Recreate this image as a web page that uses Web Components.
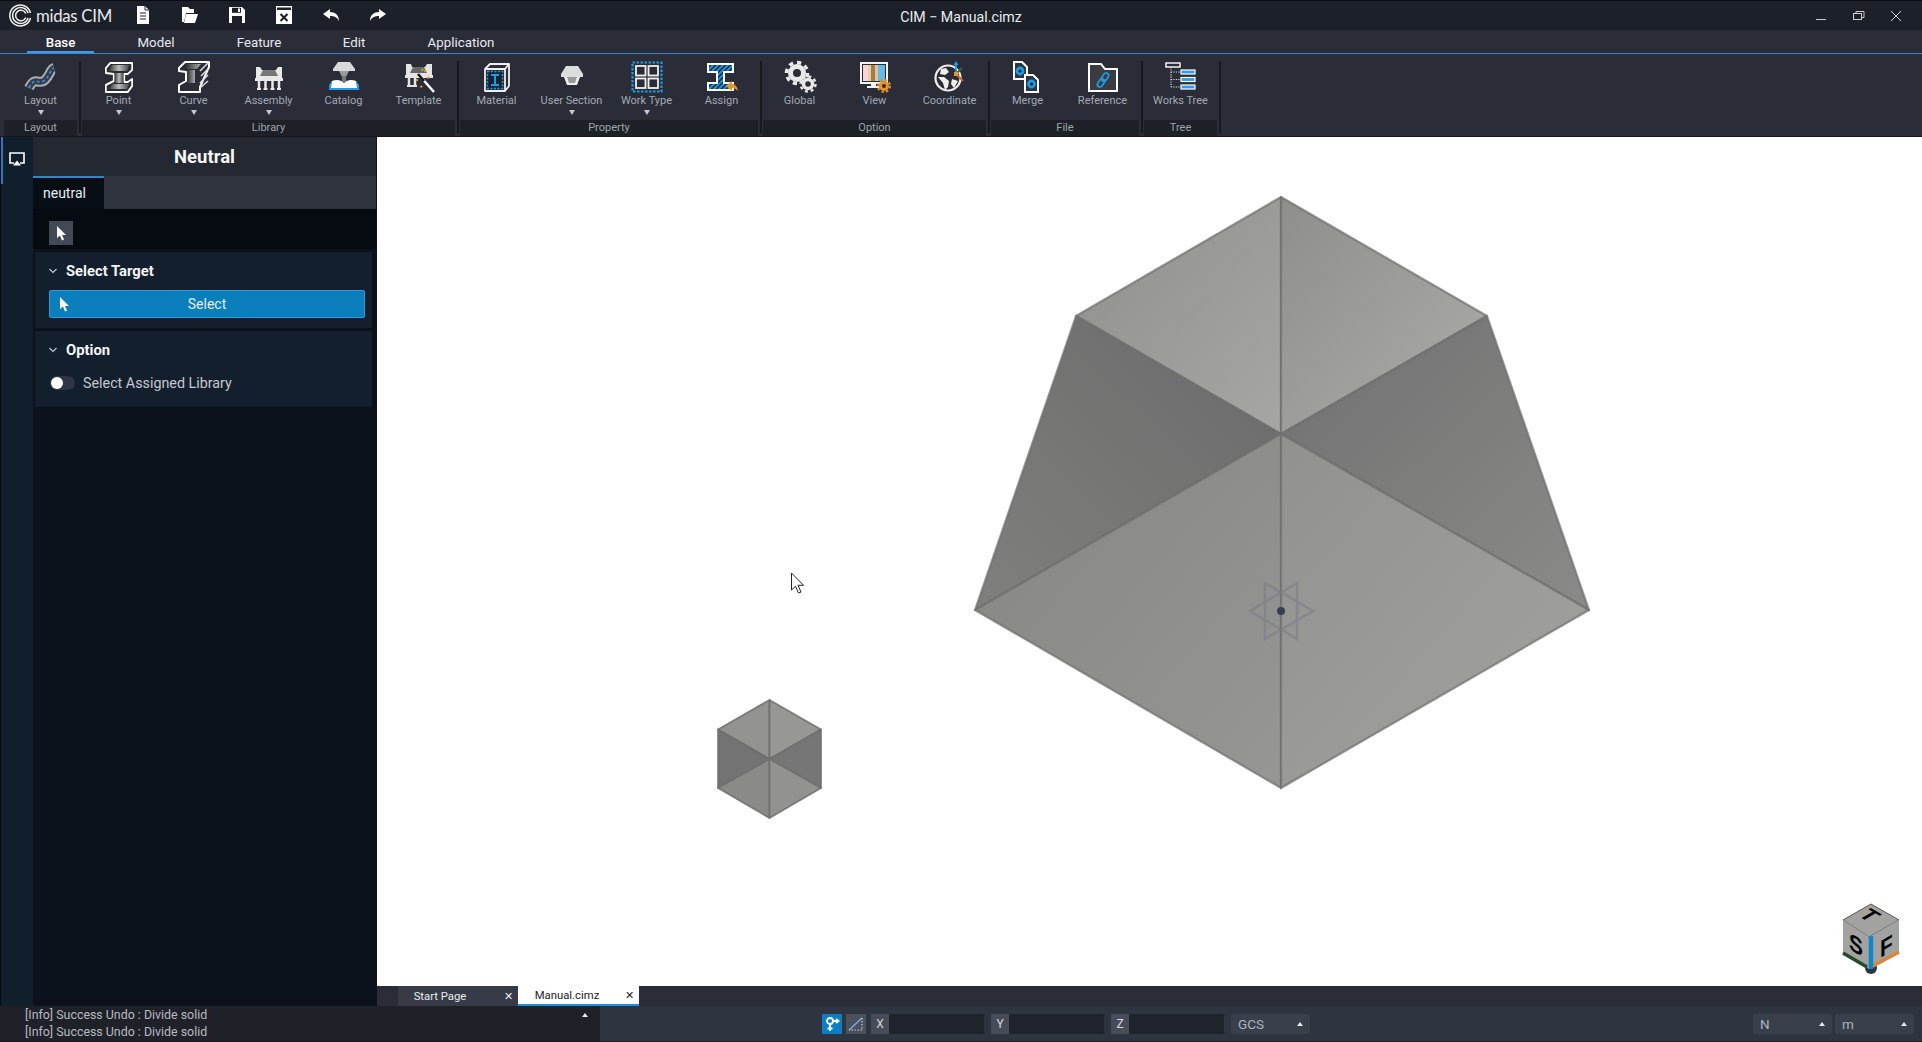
<!DOCTYPE html>
<html>
<head>
<meta charset="utf-8">
<title>CIM - Manual.cimz</title>
<style>
  html, body { margin: 0; height: 100%; overflow: hidden; background: #1c2028; font-family: Roboto, "Liberation Sans", sans-serif; }
</style>
</head>
<body>
<cim-app></cim-app>
<script>
// ---- icon set (all drawn, 32x32 box unless noted) ----
const ICONS = {
  layout: `<path d="M4 27C10 14 14 25 20 19S25 8 29 7" fill="none" stroke="#a9acb1" stroke-width="10"/><path d="M4 27C10 14 14 25 20 19S25 8 29 7" fill="none" stroke="#363b47" stroke-width="6"/><path d="M4 27C10 14 14 25 20 19S25 8 29 7" fill="none" stroke="#2c8fdc" stroke-width="1.800" stroke-dasharray="3 2.500"/>`,
  point: `<defs><linearGradient id="w"><stop offset="0" stop-color="#333"/><stop offset=".5" stop-color="#bbb"/><stop offset="1" stop-color="#444"/></linearGradient></defs>
    <g transform="translate(2 0) scale(.875 1)">
    <path d="M6 2H31V9L26 13H22V21H26L31 18V25L26 31H1V24L10 20V13L1 12V7Z" fill="#2a2d38" stroke="#fff" stroke-width="2" stroke-linejoin="round"/>
    <path d="M4 10L8 4H28L25 10Z" fill="url(#w)"/><rect x="11" y="12" width="10" height="10" fill="url(#w)"/><path d="M4 28L9 23H28L25 28Z" fill="url(#w)"/></g>`,
  curve: `<defs><linearGradient id="w"><stop offset="0" stop-color="#2d2d2d"/><stop offset="1" stop-color="#aaa"/></linearGradient></defs>
    <path d="M1 7L7 1H31V6L22 26V31H1V24L8 20V11L1 10Z" fill="#2a2d38" stroke="#fff" stroke-width="2" stroke-linejoin="round"/>
    <path d="M9 3H23L19 8H7Z" fill="url(#w)"/><rect x="9" y="9" width="8" height="13" fill="url(#w)"/><path d="M22 10L30 2M23 15L30 8M22 22L30 14M22 27L30 20" stroke="#ddd" stroke-width="1.500"/>`,
  assembly: `<path d="M3 6H7L9 9H23L25 6H29V17H3Z" fill="#e8e8e8"/><path d="M7 15L10 9H22L25 15Z" fill="#777"/><path d="M2 17H30V20H2Z" fill="#e8e8e8"/><path d="M6 20V28M12.500 20V28M19.500 20V28M26 20V28" stroke="#e8e8e8" stroke-width="2.500"/><path d="M4 28H8M10.500 28H14.500M17.500 28H21.500M24 28H28" stroke="#e8e8e8" stroke-width="2"/>`,
  catalog: `<path d="M10 1H22L27 8V10H5V8Z" fill="#d9d9d9"/><path d="M11 10H21L18 16H14Z" fill="#9a9a9a"/><rect x="14" y="15" width="4" height="6" fill="#777"/><path d="M4 20C9 18 13 19 16 22C19 19 23 18 28 20L30 27H2Z" fill="#fff"/><path d="M1 24L4 20L3 27H16H29L28 20L31 24V29H1Z" fill="#2a97e8"/>`,
  template: `<path d="M3 3H8L9 6H22L24 3H29V14H3Z" fill="#e4e4e4"/><path d="M7 12L10 6H21L24 12Z" fill="#666"/><path d="M2 14H30V17H2Z" fill="#e4e4e4"/><path d="M6 17V25M12 17V25" stroke="#e4e4e4" stroke-width="2.500"/><path d="M4 25H14" stroke="#e4e4e4" stroke-width="2"/><path d="M16 14L31 31" stroke="#fff" stroke-width="2.500"/><path d="M15 13L21 20" stroke="#111" stroke-width="2.500"/><path d="M22 9L23 12M13 19L16 19M24 17L27 16M19 25L17 27M19 8L20 10" stroke="#e9992b" stroke-width="2" stroke-dasharray="2 1"/>`,
  material: `<path d="M4 8L9 3H28V25L24 30H4Z" fill="#2d2d33" stroke="#eee" stroke-width="1.800" stroke-linejoin="round"/><path d="M4 8H24V30M24 8L28 3" fill="none" stroke="#eee" stroke-width="1.800"/><rect x="6.500" y="10.500" width="15" height="17" fill="#16232f" stroke="#1d9be5" stroke-width="1.500" stroke-dasharray="2 1.500"/><path d="M10 14H18M10 24H18M14 14V24" stroke="#1d9be5" stroke-width="2"/>`,
  usersection: `<path d="M10 5H22L27 13V16H5V13Z" fill="#dcdcdc"/><path d="M8 16H24L21 24H11Z" fill="#eee"/><path d="M11 16H21L19 22H13Z" fill="#999"/>`,
  worktype: `<rect x="1.500" y="1.500" width="29" height="29" fill="none" stroke="#1d9be5" stroke-width="2.200" stroke-dasharray="2.500 1.500"/><g fill="none" stroke="#f0f0f0" stroke-width="1.800"><rect x="5" y="5" width="9.500" height="9.500"/><rect x="17.500" y="5" width="9.500" height="9.500"/><rect x="5" y="17.500" width="9.500" height="9.500"/><rect x="17.500" y="17.500" width="9.500" height="9.500"/></g>`,
  assign: `<defs><pattern id="h" width="3.500" height="3.500" patternUnits="userSpaceOnUse" patternTransform="rotate(45)"><rect width="3.500" height="3.500" fill="#15324a"/><rect width="1.800" height="3.500" fill="#1d9be5"/></pattern></defs>
    <path d="M2 3H27V11H18V22H27V29H2V22H11V11H2Z" fill="url(#h)" stroke="#fff" stroke-width="2"/><path d="M20 25L26 20V23C29 23 31 25 32 30C30 28 28 27 26 27V30Z" fill="#e5962b"/>`,
  global: `<circle cx="13" cy="12" r="6.500" fill="none" stroke="#e8e8e8" stroke-width="5"/><circle cx="13" cy="12" r="10.500" fill="none" stroke="#e8e8e8" stroke-width="3.500" stroke-dasharray="4.200 4"/><circle cx="24" cy="23" r="4.500" fill="#2a2d38" stroke="#e8e8e8" stroke-width="3.500"/><circle cx="24" cy="23" r="7.500" fill="none" stroke="#e8e8e8" stroke-width="2.500" stroke-dasharray="3 2.900"/>`,
  view: `<rect x="2" y="2" width="26" height="20" fill="#2a2d38" stroke="#f3f3f3" stroke-width="2"/><rect x="4" y="4" width="5" height="16" fill="#f7d4d7"/><rect x="9" y="4" width="3" height="16" fill="#e8cfa0"/><rect x="12" y="4" width="4" height="16" fill="#a57c4c"/><rect x="16" y="4" width="3" height="16" fill="#d9c69a"/><rect x="19" y="4" width="7" height="16" fill="#6ab8e6"/><path d="M12 22H17V25H21V27H8V25H12Z" fill="#f3f3f3"/><circle cx="25" cy="25" r="3.500" fill="#2a2d38" stroke="#e5922a" stroke-width="3"/><circle cx="25" cy="25" r="6" fill="none" stroke="#e5922a" stroke-width="2" stroke-dasharray="2.500 2.200"/>`,
  coordinate: `<circle cx="14" cy="17" r="12.500" fill="none" stroke="#eee" stroke-width="2.200"/><path d="M7 8L12 7L15 11L11 14L6 13ZM4 16L10 16L15 20L14 26L11 29L9 22ZM18 18L24 20L20 27L17 23Z" fill="#eee"/><path d="M22 13V2" stroke="#1d9be5" stroke-width="1.800"/><path d="M22 0L24.500 4H19.500Z" fill="#1d9be5"/><path d="M22 13L28 7" stroke="#2c6b30" stroke-width="1.800"/><path d="M22 13L29 20" stroke="#d8622a" stroke-width="1.800"/><rect x="20" y="11" width="4" height="4" fill="#e5962b"/>`,
  merge: `<path d="M2 1H10L15 6V18H2Z" fill="#2d3540" stroke="#fff" stroke-width="2"/><circle cx="8" cy="10" r="3" fill="#123" stroke="#1d9be5" stroke-width="2.800"/><path d="M13 14H21L26 19V31H13Z" fill="#2d3540" stroke="#fff" stroke-width="2"/><circle cx="19.500" cy="23" r="3" fill="#123" stroke="#1d9be5" stroke-width="2.800"/>`,
  reference: `<path d="M2 3H14L18 8H30V30H2Z" fill="#3b3c42" stroke="#fff" stroke-width="2"/><g transform="rotate(-55 16 19)" fill="none" stroke="#1d9be5" stroke-width="1.700"><rect x="8" y="16.500" width="9" height="5" rx="2.500"/><rect x="15" y="16.500" width="9" height="5" rx="2.500"/></g>`,
  workstree: `<rect x="1" y="2" width="14" height="4" fill="#2a2d38" stroke="#fff" stroke-width="1.400"/><path d="M6 6V26M6 11H15M6 18.500H15M6 26H15" fill="none" stroke="#ddd" stroke-width="1.200" stroke-dasharray="1.200 1.200"/><g fill="#2b9ce6" stroke="#fff" stroke-width="1.200"><rect x="16" y="9" width="14" height="4"/><rect x="16" y="16.500" width="14" height="4"/><rect x="16" y="24" width="14" height="4"/></g>`,
  // titlebar, 18x18
  doc: `<path d="M3 0H11L15 4V18H3Z" fill="#fff"/><path d="M6 7H12M6 10H12M6 13H12" stroke="#1c2028" stroke-width="1.200"/><path d="M11 0V4H15" fill="none" stroke="#1c2028" stroke-width="1"/>`,
  open: `<path d="M1 1H7L9 3H13V7H5L3 16H1Z" fill="#fff"/><path d="M5 8H17L14 17H3Z" fill="#fff"/>`,
  save: `<path d="M1 1H14L17 4V17H1Z" fill="#fff"/><rect x="4" y="1.800" width="9" height="5" fill="#1c2028"/><rect x="10" y="2.500" width="2" height="3.500" fill="#fff"/><rect x="4" y="10" width="10" height="7" fill="#1c2028"/>`,
  closefile: `<rect x="1" y="0" width="16" height="18" fill="#fff"/><rect x="2" y="1.500" width="14" height="2.500" fill="#1c2028"/><path d="M5.500 8L12.500 15M12.500 8L5.500 15" stroke="#1c2028" stroke-width="2"/>`,
  undo: `<path d="M8 3L1 8L8 13V10C12 10 15 11 17 15C17 9 13 6 8 6Z" fill="#fff"/>`,
  redo: `<path d="M10 3L17 8L10 13V10C6 10 3 11 1 15C1 9 5 6 10 6Z" fill="#fff"/>`
};

class CimIcon extends HTMLElement {
  connectedCallback() {
    const size = this.getAttribute('size') || 32;
    const box = this.getAttribute('box') || 32;
    this.attachShadow({ mode: 'open' }).innerHTML = `
      <style>:host { display: block; width: ${size}px; height: ${size}px; } svg { display: block; overflow: visible; }</style>
      <svg width="${size}" height="${size}" viewBox="0 0 ${box} ${box}">${ICONS[this.getAttribute('name')] || ''}</svg>`;
  }
}
customElements.define('cim-icon', CimIcon);

class CimTitlebar extends HTMLElement {
  connectedCallback() {
    const tools = ['doc', 'open', 'save', 'closefile', 'undo', 'redo'];
    this.attachShadow({ mode: 'open' }).innerHTML = `
      <style>
        :host { display: flex; align-items: center; height: 30px; background: #1c2028; border-top: 1px solid #0a0c10; box-sizing: border-box; position: relative; color: #fff; }
        .logo { display: flex; align-items: center; margin-left: 9px; width: 125px; gap: 4px; }
        .name { font: 400 16.800px Lato, Roboto, sans-serif; color: #e6e8ea; letter-spacing: -.3px; }
        .tools { display: flex; gap: 29px; margin-top: -2px; }
        .title { position: absolute; left: 0; right: 0; top: 8px; text-align: center; font-size: 14.200px; color: #e9ebee; }
        .win { margin-left: auto; display: flex; gap: 21px; padding-right: 18px; }
      </style>
      <div class="logo">
        <svg width="23" height="23" viewBox="0 0 23 23" fill="none" stroke="#f0f0f0" stroke-width="1.500">
          <path d="M21.500 9A10.500 10.500 0 1 0 21.500 14"/><path d="M19.200 9A8 8 0 1 0 19.200 14"/><path d="M16.800 9.500A5.300 5.300 0 1 0 16.800 13.500"/>
        </svg>
        <span class="name">midas CIM</span>
      </div>
      <div class="tools">${tools.map(t => `<cim-icon name="${t}" size="18" box="18"></cim-icon>`).join('')}</div>
      <div class="title">CIM − Manual.cimz</div>
      <div class="win">
        <svg width="16" height="16" viewBox="0 0 16 16" fill="none" stroke="#c9ccd0" stroke-width="1"><path d="M2 11.500H12"/></svg>
        <svg width="16" height="16" viewBox="0 0 16 16" fill="none" stroke="#c9ccd0" stroke-width="1"><rect x="2.500" y="5.500" width="8" height="6"/><path d="M5 5V3.500H13V9.500H11"/></svg>
        <svg width="16" height="16" viewBox="0 0 16 16" fill="none" stroke="#c9ccd0" stroke-width="1"><path d="M3 3L13 13M13 3L3 13"/></svg>
      </div>`;
  }
}
customElements.define('cim-titlebar', CimTitlebar);

class CimRibbonTabs extends HTMLElement {
  connectedCallback() {
    const tabs = [['Model', 124], ['Feature', 82], ['Edit', 108], ['Application', 106]];
    this.attachShadow({ mode: 'open' }).innerHTML = `
      <style>
        :host { display: flex; height: 24px; box-sizing: border-box; background: #2a2d38; border-bottom: 1px solid #3d86d4; padding-left: 27px; font-size: 13.300px; color: #e8eaee; }
        .tab { height: 23px; line-height: 25px; text-align: center; }
        .on { width: 67px; box-shadow: inset 0 -2px 0 #3d9be8; color: #fff; font-weight: 500; }
      </style>
      <div class="tab on">Base</div>
      ${tabs.map(([t, w]) => `<div class="tab" style="width:${w}px">${t}</div>`).join('')}`;
  }
}
customElements.define('cim-ribbon-tabs', CimRibbonTabs);

class CimRibbonButton extends HTMLElement {
  connectedCallback() {
    const drop = this.hasAttribute('drop');
    this.attachShadow({ mode: 'open' }).innerHTML = `
      <style>
        :host { display: flex; flex-direction: column; align-items: center; width: 75px; height: 66px; padding-top: 7px; box-sizing: border-box; }
        .label { font-size: 11px; line-height: 14px; margin-top: 1px; color: #a3a9b4; white-space: nowrap; }
        .arrow { width: 0; height: 0; margin-top: 2px; border: 3px solid transparent; border-top: 5px solid #c5c8cd; border-bottom: 0; }
      </style>
      <cim-icon name="${this.getAttribute('icon')}"></cim-icon>
      <span class="label"><slot></slot></span>
      ${drop ? '<span class="arrow"></span>' : ''}`;
  }
}
customElements.define('cim-ribbon-button', CimRibbonButton);

class CimRibbonGroup extends HTMLElement {
  connectedCallback() {
    const n = this.children.length;
    this.attachShadow({ mode: 'open' }).innerHTML = `
      <style>
        :host { display: flex; }
        .body { width: ${n * 75}px; }
        .btns { display: flex; margin-left: -1px; height: 66px; }
        .cap { width: ${n * 75 - 2}px; height: 16px; line-height: 16px; background: #1d2027; text-align: center; font-size: 11px; color: #9ea4ae; }
        .sep { width: 2px; margin: 7px 1px 3px 0; background: #17191f; }
      </style>
      <div class="body">
        <div class="btns"><slot></slot></div>
        <div class="cap">${this.getAttribute('label')}</div>
      </div>
      <div class="sep"></div>`;
  }
}
customElements.define('cim-ribbon-group', CimRibbonGroup);

class CimRibbon extends HTMLElement {
  connectedCallback() {
    this.attachShadow({ mode: 'open' }).innerHTML = `
      <style>:host { display: flex; height: 83px; padding-left: 4px; box-sizing: border-box; background: #2a2d38; border-bottom: 1px solid #15171c; }</style>
      <slot></slot>`;
  }
}
customElements.define('cim-ribbon', CimRibbon);

class CimSection extends HTMLElement {
  connectedCallback() {
    this.attachShadow({ mode: 'open' }).innerHTML = `
      <style>
        :host { display: block; height: 76px; margin: 0 4px 3px 2px; background: #141f2e; }
        .head { display: flex; align-items: center; height: 38px; padding-left: 14px; font-size: 14.800px; font-weight: 700; color: #f2f4f6; gap: 9px; }
        svg { flex: none; }
      </style>
      <div class="head">
        <svg width="8" height="6" viewBox="0 0 8 6" fill="none" stroke="#c4c9cf" stroke-width="1.100"><path d="M.5 1L4 4.500L7.500 1"/></svg>
        <span>${this.getAttribute('title')}</span>
      </div>
      <slot></slot>`;
  }
}
customElements.define('cim-section', CimSection);

class CimSelectButton extends HTMLElement {
  connectedCallback() {
    this.attachShadow({ mode: 'open' }).innerHTML = `
      <style>
        :host { display: flex; align-items: center; position: relative; height: 28px; margin: 0 7px 0 14px; box-sizing: border-box; background: #0b7fbb; border: 1px solid #2c98e2; border-radius: 2px; color: #e6eef4; font-size: 14px; justify-content: center; }
        svg { position: absolute; left: 9px; top: 6px; }
      </style>
      <svg width="11" height="15" viewBox="0 0 11 15"><path d="M1 0V12L4 9.500L6 14.500L8 13.500L6 9H10Z" fill="#fff"/></svg>
      <slot></slot>`;
  }
}
customElements.define('cim-select-button', CimSelectButton);

class CimToggle extends HTMLElement {
  connectedCallback() {
    this.attachShadow({ mode: 'open' }).innerHTML = `
      <style>
        :host { display: flex; align-items: center; margin-left: 15px; height: 28px; gap: 8px; font-size: 14.300px; color: #c3c8cf; }
        .track { width: 25px; height: 14px; border-radius: 7px; background: #2e3546; position: relative; flex: none; }
        .knob { position: absolute; left: 1px; top: 1px; width: 12px; height: 12px; border-radius: 50%; background: #fff; }
      </style>
      <span class="track"><span class="knob"></span></span>
      <slot></slot>`;
  }
}
customElements.define('cim-toggle', CimToggle);

class CimSidePanel extends HTMLElement {
  connectedCallback() {
    this.attachShadow({ mode: 'open' }).innerHTML = `
      <style>
        :host { display: flex; width: 377px; flex: none; background: #0b121c; border-left: 1px solid #05080c; box-sizing: border-box; color: #fff; }
        .rail { width: 32px; flex: none; background: #111e2b; }
        .rail-item { height: 47px; box-sizing: border-box; border-left: 2px solid #1f7fc4; display: flex; justify-content: center; align-items: center; padding-right: 2px; padding-bottom: 2px; }
        .main { flex: 1; min-width: 0; margin-right: 1px; }
        .title { height: 39px; line-height: 41px; background: #242831; text-align: center; font-size: 18.500px; font-weight: 700; color: #f4f6f8; }
        .tabs { height: 33px; background: #2f343e; display: flex; }
        .tab { width: 71px; box-sizing: border-box; background: #080e16; border-top: 2px solid #2f86c8; text-align: left; padding-left: 10px; line-height: 30px; font-size: 14px; color: #e8ecef; }
        .tools { height: 40px; background: #060b12; padding: 12px 0 0 16px; box-sizing: border-box; margin-bottom: 3px; }
        .tool { width: 24px; height: 24px; background: #444a55; display: flex; justify-content: center; align-items: center; }
      </style>
      <div class="rail">
        <div class="rail-item">
          <svg width="16" height="15" viewBox="0 0 16 15" fill="none" stroke="#fff" stroke-width="1.600"><path d="M5 11H1V1H15V11H11"/><path d="M8 8.500L12 13.500H4Z" fill="#fff" stroke="none"/></svg>
        </div>
      </div>
      <div class="main">
        <div class="title">Neutral</div>
        <div class="tabs"><div class="tab">neutral</div></div>
        <div class="tools"><div class="tool"><svg width="11" height="15" viewBox="0 0 11 15"><path d="M1 0V12L4 9.500L6 14.500L8 13.500L6 9H10Z" fill="#fff"/></svg></div></div>
        <slot></slot>
      </div>`;
  }
}
customElements.define('cim-side-panel', CimSidePanel);

class CimViewport extends HTMLElement {
  connectedCallback() {
    this.attachShadow({ mode: 'open' }).innerHTML = `
      <style>
        :host { display: block; position: relative; flex: 1; background: #fff; overflow: hidden; }
        svg { position: absolute; inset: 0; width: 100%; height: 100%; }
        text { font-family: "Liberation Sans", Roboto, sans-serif; font-weight: 700; fill: #000; }
      </style>
      <svg viewBox="377 137 1545 849" preserveAspectRatio="none">
        <defs>
          <linearGradient id="tl" x1="0" y1="0" x2="1" y2="1"><stop offset="0" stop-color="#8f8f8d"/><stop offset="1" stop-color="#a6a6a4"/></linearGradient>
          <linearGradient id="tr" x1="0" y1="0" x2="1" y2="1"><stop offset="0" stop-color="#8e8e8c"/><stop offset="1" stop-color="#acacaa"/></linearGradient>
          <linearGradient id="lf" x1="1" y1="0" x2="0" y2="1"><stop offset="0" stop-color="#6a6a6a"/><stop offset="1" stop-color="#7f7f7e"/></linearGradient>
          <linearGradient id="rf" x1="0" y1="0" x2="1" y2="1"><stop offset="0" stop-color="#707070"/><stop offset="1" stop-color="#8a8a89"/></linearGradient>
          <linearGradient id="bl" x1="0" y1="0" x2="1" y2="1"><stop offset="0" stop-color="#858584"/><stop offset="1" stop-color="#969695"/></linearGradient>
          <linearGradient id="br" x1="0" y1="0" x2="1" y2="1"><stop offset="0" stop-color="#91918f"/><stop offset="1" stop-color="#a2a2a0"/></linearGradient>
        </defs>
        <g stroke="#6e6e6e" stroke-opacity=".7" stroke-width="2.200" stroke-linejoin="round">
          <polygon points="1281,197 1076,316 1281,434" fill="url(#tl)"/>
          <polygon points="1281,197 1487,316 1281,434" fill="url(#tr)"/>
          <polygon points="1076,316 975,610 1281,434" fill="url(#lf)"/>
          <polygon points="1487,316 1589,610 1281,434" fill="url(#rf)"/>
          <polygon points="975,610 1281,788 1281,434" fill="url(#bl)"/>
          <polygon points="1589,610 1281,788 1281,434" fill="url(#br)"/>
        </g>
        <g fill="none" stroke="#7d7d88" stroke-width="2.400" opacity=".6">
          <polygon points="1250,611 1297,583 1297,639"/>
          <polygon points="1313,611 1265,583 1265,639"/>
        </g>
        <circle cx="1281" cy="611" r="4" fill="#3a3e48"/>
        <g stroke="#6e6e6e" stroke-opacity=".85" stroke-width="1.800" stroke-linejoin="round">
          <polygon points="769.500,700 718,729.500 769.500,759" fill="#939392"/>
          <polygon points="769.500,700 821,729.500 769.500,759" fill="#979796"/>
          <polygon points="718,729.500 718,788 769.500,759" fill="#737373"/>
          <polygon points="821,729.500 821,788 769.500,759" fill="#767676"/>
          <polygon points="718,788 769.500,818 769.500,759" fill="#8a8a89"/>
          <polygon points="821,788 769.500,818 769.500,759" fill="#929291"/>
        </g>
        <path d="M791.500 573V590L795.500 586.300L798.500 593L801 592L798 585.300H803.500Z" fill="#fff" stroke="#222" stroke-width="1"/>
        <circle cx="1871" cy="968" r="6" fill="#2e3440"/>
        <polygon points="1871,904 1899,920 1869,937 1843,920" fill="#a2a2a0" stroke="#555" stroke-width="1"/>
        <polygon points="1843,920 1869,937 1869,969 1843,953" fill="#a2a2a0"/>
        <polygon points="1899,920 1869,937 1869,969 1899,953" fill="#a2a2a0"/>
        <path d="M1843 953L1867 967" stroke="#234a2c" stroke-width="3.500"/>
        <path d="M1871 967L1899 952" stroke="#d8873a" stroke-width="3.500"/>
        <path d="M1871 936V969" stroke="#0f86c8" stroke-width="4.500"/>
        <text font-size="24" transform="matrix(.87 .5 0 1 1849 942)" y="7" x="0">S</text>
        <text font-size="24" transform="matrix(.87 -.5 0 1 1880 958)" y="0">F</text>
        <text font-size="22" transform="matrix(.87 .5 -.87 .5 1872 913)" x="-6" y="11">T</text>
      </svg>`;
  }
}
customElements.define('cim-viewport', CimViewport);

class CimDocTabs extends HTMLElement {
  connectedCallback() {
    this.attachShadow({ mode: 'open' }).innerHTML = `
      <style>
        :host { display: flex; height: 20px; padding-left: 21px; background: #2a2d38; font-size: 11.300px; }
        .tab { width: 120px; box-sizing: border-box; display: flex; padding: 0 5px 0 3px; justify-content: space-between; line-height: 21px; background: #363b47; color: #e8eaee; }
        .tab.on { background: #fff; color: #222; border-bottom: 2px solid #1d8ee0; line-height: 19px; padding-left: 10px; width: 121px; }
        .tab span:first-child { width: 78px; text-align: center; }
      </style>
      <div class="tab"><span>Start Page</span><span>✕</span></div>
      <div class="tab on"><span>Manual.cimz</span><span>✕</span></div>`;
  }
}
customElements.define('cim-doc-tabs', CimDocTabs);

class CimCoord extends HTMLElement {
  connectedCallback() {
    this.attachShadow({ mode: 'open' }).innerHTML = `
      <style>
        :host { display: flex; width: 113px; height: 20px; background: #1f232b; border-radius: 2px; }
        b { width: 18px; height: 20px; background: #474c58; color: #d4d7dc; font: 400 12px/20px Roboto, sans-serif; text-align: center; }
      </style>
      <b>${this.getAttribute('axis')}</b>`;
  }
}
customElements.define('cim-coord', CimCoord);

class CimCombo extends HTMLElement {
  connectedCallback() {
    this.attachShadow({ mode: 'open' }).innerHTML = `
      <style>
        :host { display: flex; align-items: center; justify-content: space-between; width: 79px; height: 20px; box-sizing: border-box; padding: 0 7px; background: #3a3f4c; border-radius: 2px; color: #a9b3c0; font-size: 13.500px; }
        i { width: 0; height: 0; border: 3px solid transparent; border-bottom: 4px solid #e8e8e8; border-top: 0; }
      </style>
      <slot></slot><i></i>`;
  }
}
customElements.define('cim-combo', CimCombo);

class CimStatusbar extends HTMLElement {
  connectedCallback() {
    this.attachShadow({ mode: 'open' }).innerHTML = `
      <style>
        :host { display: flex; height: 36px; background: #2e3440; border-bottom: 1px solid #15181e; box-sizing: border-box; }
        .log { position: relative; width: 600px; flex: none; background: #1e2128; padding: 0 0 0 25px; box-sizing: border-box; font-size: 12.400px; line-height: 17px; color: #b6bac1; }
        .log i { position: absolute; right: 12px; top: 7px; width: 0; height: 0; border: 3px solid transparent; border-bottom: 4px solid #e8e8e8; border-top: 0; }
        .ctl { display: flex; align-items: flex-start; padding-top: 8px; margin-left: 222px; }
        .btn { width: 20px; height: 20px; display: flex; justify-content: center; align-items: center; }
        .snap { background: #0b7fc2; margin-right: 4px; }
        .tri { background: #4b515e; margin-right: 5px; }
        cim-coord { margin-right: 7px; }
        .units { margin-left: auto; display: flex; gap: 3px; padding: 8px 8px 0 0; }
      </style>
      <div class="log">[Info] Success Undo : Divide solid<br>[Info] Success Undo : Divide solid<i></i></div>
      <div class="ctl">
        <div class="btn snap"><svg width="15" height="16" viewBox="0 0 15 16" fill="none" stroke="#fff" stroke-width="1.800"><circle cx="5" cy="5" r="3"/><path d="M5 8V15M2.500 12.500H7.500M8 5H13M11 3L13.500 5L11 7"/></svg></div>
        <div class="btn tri"><svg width="16" height="14" viewBox="0 0 16 14" fill="none" stroke="#7db4e0" stroke-width="1.200"><path d="M1 13L14 1"/><path d="M14 1V13H1" stroke="#c8ccd2" stroke-dasharray="1.500 1.500"/></svg></div>
        <cim-coord axis="X"></cim-coord>
        <cim-coord axis="Y"></cim-coord>
        <cim-coord axis="Z"></cim-coord>
        <cim-combo>GCS</cim-combo>
      </div>
      <div class="units"><cim-combo>N</cim-combo><cim-combo>m</cim-combo></div>`;
  }
}
customElements.define('cim-statusbar', CimStatusbar);

class CimApp extends HTMLElement {
  connectedCallback() {
    this.attachShadow({ mode: 'open' }).innerHTML = `
      <style>
        :host { display: flex; flex-direction: column; height: 1042px; width: 1922px; overflow: hidden; }
        .work { display: flex; height: 869px; }
        .center { flex: 1; display: flex; flex-direction: column; min-width: 0; }
      </style>
      <cim-titlebar></cim-titlebar>
      <cim-ribbon-tabs></cim-ribbon-tabs>
      <cim-ribbon>
        <cim-ribbon-group label="Layout"><cim-ribbon-button icon="layout" drop>Layout</cim-ribbon-button></cim-ribbon-group>
        <cim-ribbon-group label="Library">
          <cim-ribbon-button icon="point" drop>Point</cim-ribbon-button>
          <cim-ribbon-button icon="curve" drop>Curve</cim-ribbon-button>
          <cim-ribbon-button icon="assembly" drop>Assembly</cim-ribbon-button>
          <cim-ribbon-button icon="catalog">Catalog</cim-ribbon-button>
          <cim-ribbon-button icon="template">Template</cim-ribbon-button>
        </cim-ribbon-group>
        <cim-ribbon-group label="Property">
          <cim-ribbon-button icon="material">Material</cim-ribbon-button>
          <cim-ribbon-button icon="usersection" drop>User Section</cim-ribbon-button>
          <cim-ribbon-button icon="worktype" drop>Work Type</cim-ribbon-button>
          <cim-ribbon-button icon="assign">Assign</cim-ribbon-button>
        </cim-ribbon-group>
        <cim-ribbon-group label="Option">
          <cim-ribbon-button icon="global">Global</cim-ribbon-button>
          <cim-ribbon-button icon="view">View</cim-ribbon-button>
          <cim-ribbon-button icon="coordinate">Coordinate</cim-ribbon-button>
        </cim-ribbon-group>
        <cim-ribbon-group label="File">
          <cim-ribbon-button icon="merge">Merge</cim-ribbon-button>
          <cim-ribbon-button icon="reference">Reference</cim-ribbon-button>
        </cim-ribbon-group>
        <cim-ribbon-group label="Tree"><cim-ribbon-button icon="workstree">Works Tree</cim-ribbon-button></cim-ribbon-group>
      </cim-ribbon>
      <div class="work">
        <cim-side-panel>
          <cim-section title="Select Target"><cim-select-button>Select</cim-select-button></cim-section>
          <cim-section title="Option"><cim-toggle>Select Assigned Library</cim-toggle></cim-section>
        </cim-side-panel>
        <div class="center">
          <cim-viewport></cim-viewport>
          <cim-doc-tabs></cim-doc-tabs>
        </div>
      </div>
      <cim-statusbar></cim-statusbar>`;
  }
}
customElements.define('cim-app', CimApp);
</script>
</body>
</html>
